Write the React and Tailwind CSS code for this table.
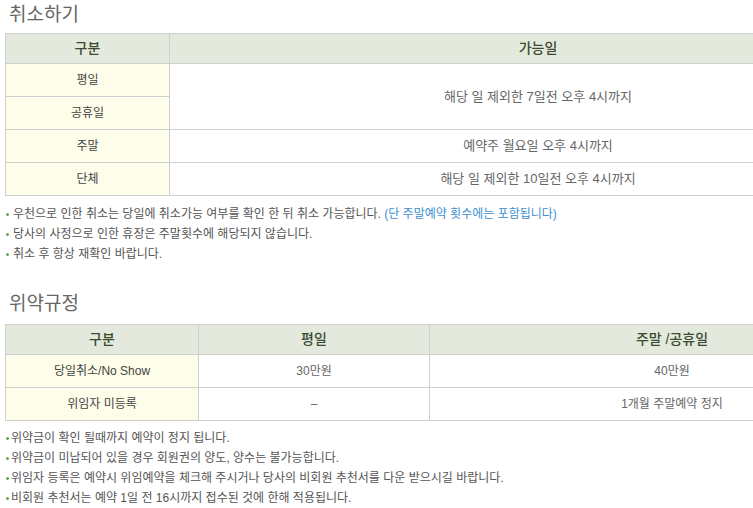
import React from 'react';

const font = { fontFamily: '"Liberation Sans", "Noto Sans CJK KR", sans-serif' };

const Bullet = ({ children, tight }) => (
  <li className="flex items-center h-5 text-[12px] text-[#555]">
    <span className={`w-[3px] h-[3px] bg-[#6aa84f] rounded-full ml-[6px] ${tight ? 'mr-[2px]' : 'mr-[4px]'}`} />
    <span>{children}</span>
  </li>
);

const App = () => {
  return (
    <div className="w-[753px] h-[508px] overflow-hidden bg-white" style={font}>
      {/* 취소하기 */}
      <h2 className="pl-[9px] pt-[3px] h-[33px] text-[19px] leading-[24px] text-[#666]">취소하기</h2>
      <table className="w-[902px] ml-[5px] border-collapse text-[13px]">
        <thead>
          <tr className="h-[30px] bg-[#e3eadd]">
            <th className="w-[164px] border border-[#cfcfcf] text-[14px] font-medium text-[#3c4a30]">구분</th>
            <th className="border border-[#cfcfcf] text-[14px] font-medium text-[#3c4a30]">가능일</th>
          </tr>
        </thead>
        <tbody>
          <tr className="h-[33px]">
            <td className="border border-[#cfcfcf] bg-[#fdfde9] text-center text-[12px] text-[#444]">평일</td>
            <td rowSpan={2} className="border border-[#cfcfcf] text-center text-[#666]">해당 일 제외한 7일전 오후 4시까지</td>
          </tr>
          <tr className="h-[33px]">
            <td className="border border-[#cfcfcf] bg-[#fdfde9] text-center text-[12px] text-[#444]">공휴일</td>
          </tr>
          <tr className="h-[33px]">
            <td className="border border-[#cfcfcf] bg-[#fdfde9] text-center text-[12px] text-[#444]">주말</td>
            <td className="border border-[#cfcfcf] text-center text-[#666]">예약주 월요일 오후 4시까지</td>
          </tr>
          <tr className="h-[33px]">
            <td className="border border-[#cfcfcf] bg-[#fdfde9] text-center text-[12px] text-[#444]">단체</td>
            <td className="border border-[#cfcfcf] text-center text-[#666]">해당 일 제외한 10일전 오후 4시까지</td>
          </tr>
        </tbody>
      </table>
      <ul className="mt-[8px]">
        <Bullet>
          우천으로 인한 취소는 당일에 취소가능 여부를 확인 한 뒤 취소 가능합니다.{' '}
          <span className="text-[#3d8fd0]">(단 주말예약 횟수에는 포함됩니다)</span>
        </Bullet>
        <Bullet>당사의 사정으로 인한 휴장은 주말횟수에 해당되지 않습니다.</Bullet>
        <Bullet>취소 후 항상 재확인 바랍니다.</Bullet>
      </ul>

      {/* 위약규정 */}
      <h2 className="pl-[9px] mt-[28px] h-[32px] text-[19px] leading-[24px] text-[#666]">위약규정</h2>
      <table className="w-[910px] ml-[5px] border-collapse text-[12px]">
        <thead>
          <tr className="h-[30px] bg-[#e3eadd]">
            <th className="w-[193px] border border-[#cfcfcf] text-[14px] font-medium text-[#3c4a30]">구분</th>
            <th className="w-[231px] border border-[#cfcfcf] text-[14px] font-medium text-[#3c4a30]">평일</th>
            <th className="border border-[#cfcfcf] text-[14px] font-medium text-[#3c4a30]">주말 /공휴일</th>
          </tr>
        </thead>
        <tbody>
          <tr className="h-[33px]">
            <td className="border border-[#cfcfcf] bg-[#fdfde9] text-center text-[#444]">당일취소/No Show</td>
            <td className="border border-[#cfcfcf] text-center text-[#666]">30만원</td>
            <td className="border border-[#cfcfcf] text-center text-[#666]">40만원</td>
          </tr>
          <tr className="h-[33px]">
            <td className="border border-[#cfcfcf] bg-[#fdfde9] text-center text-[#444]">위임자 미등록</td>
            <td className="border border-[#cfcfcf] text-center text-[#666]">–</td>
            <td className="border border-[#cfcfcf] text-center text-[#666]">1개월 주말예약 정지</td>
          </tr>
        </tbody>
      </table>
      <ul className="mt-[7px]">
        <Bullet tight>위약금이 확인 될때까지 예약이 정지 됩니다.</Bullet>
        <Bullet tight>위약금이 미납되어 있을 경우 회원권의 양도, 양수는 불가능합니다.</Bullet>
        <Bullet tight>위임자 등록은 예약시 위임예약을 체크해 주시거나 당사의 비회원 추천서를 다운 받으시길 바랍니다.</Bullet>
        <Bullet tight>비회원 추천서는 예약 1일 전 16시까지 접수된 것에 한해 적용됩니다.</Bullet>
      </ul>
    </div>
  );
};

export default App;
